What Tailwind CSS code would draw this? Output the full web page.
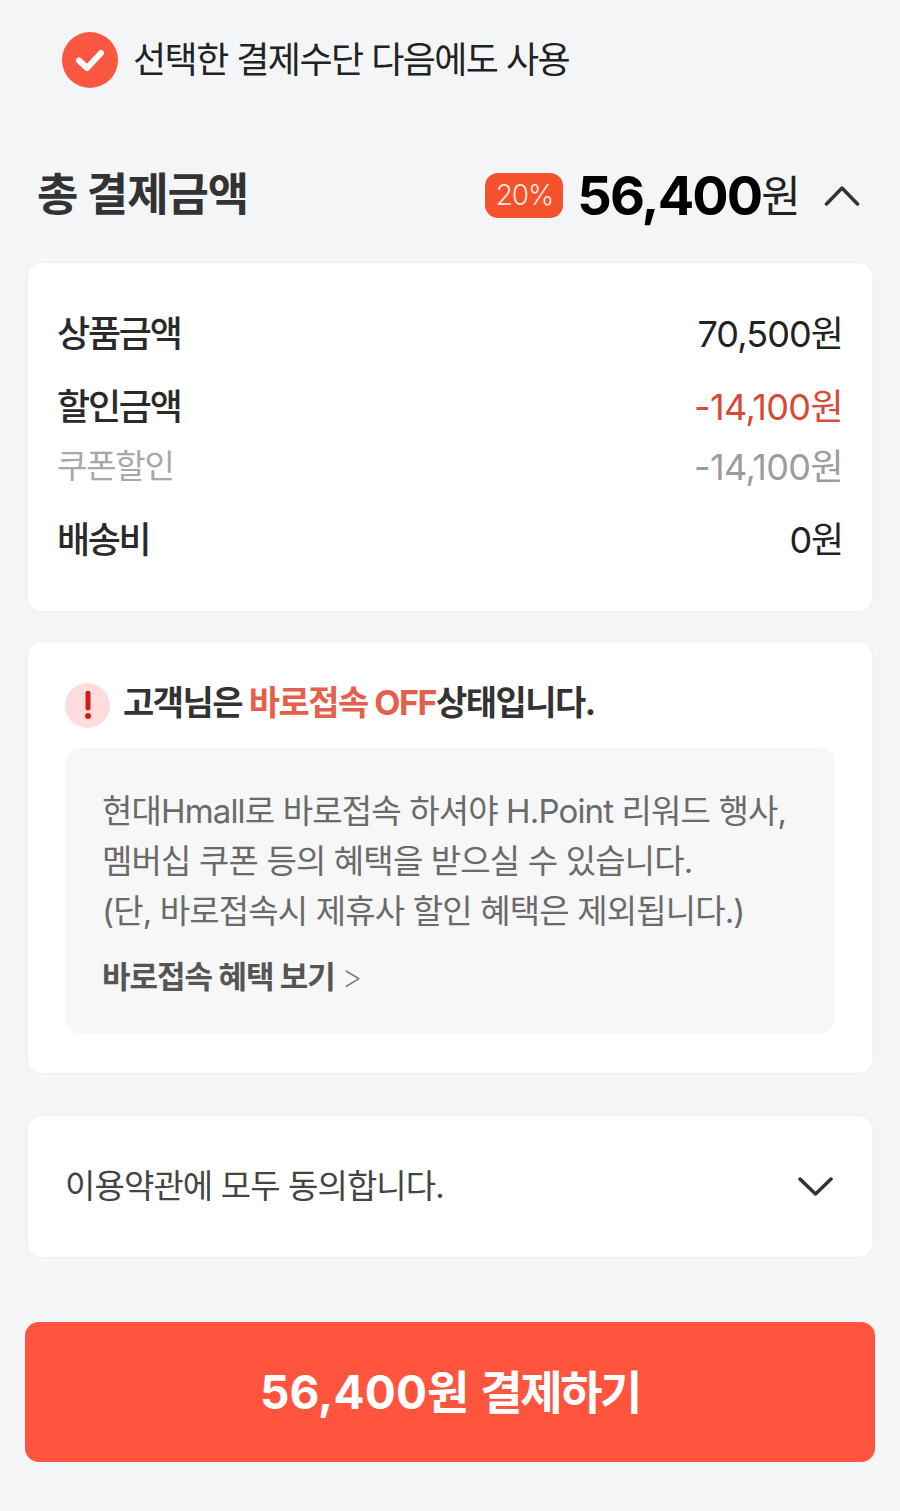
<!DOCTYPE html>
<html lang="ko">
<head>
  <meta charset="UTF-8">
  <meta name="viewport" content="width=device-width, initial-scale=1.0">
  <title>결제하기</title>
  <script src="https://cdn.jsdelivr.net/npm/@tailwindcss/browser@4"></script>
</head>
<body class="w-[900px] h-[1511px] overflow-hidden bg-[#f4f5f7] font-['Inter','Noto_Sans_CJK_KR',sans-serif] text-[#222]">

  <!-- Saved payment method -->
  <div class="flex items-center gap-[15px] pl-[62px] pt-[32px] h-[87px]">
    <svg class="w-[56px] h-[56px] shrink-0" viewBox="0 0 56 56">
      <circle cx="28" cy="28" r="28" fill="#f9573f"/>
      <path d="M17 28.5 L25 36 L39 21" fill="none" stroke="#fff" stroke-width="6" stroke-linecap="round" stroke-linejoin="round"/>
    </svg>
    <span class="text-[36px] leading-none tracking-[-1.55px]">선택한 결제수단 다음에도 사용</span>
  </div>

  <!-- Total -->
  <div class="flex items-center justify-between pl-[37px] pr-[40px] mt-[80px] h-[56px]">
    <span class="text-[45px] font-bold tracking-[-1.1px] text-[#333]">총 결제금액</span>
    <div class="flex items-center">
      <span class="flex items-center justify-center w-[78px] h-[45px] rounded-[13px] bg-[#f4512c] text-[#ffe9df] text-[28px] font-light tracking-[-1.2px]">20%</span>
      <span class="ml-[14px] text-[54px] font-bold tracking-[-1.9px] text-black">56,400<span class="align-[3px] text-[43px] font-normal text-[#222]">원</span></span>
      <svg class="w-[36px] h-[22px] ml-[25px]" viewBox="0 0 36 22">
        <path d="M2.5 20 L18 4 L33.5 20" fill="none" stroke="#333" stroke-width="3.5" stroke-linecap="round" stroke-linejoin="round"/>
      </svg>
    </div>
  </div>

  <!-- Price breakdown -->
  <section class="mx-[27px] mt-[39px] h-[350px] bg-white rounded-[14px] border border-[#eef0f2] px-[29px] pt-[48px] text-[36px]">
    <div class="flex justify-between items-center h-[46px]">
      <span class="font-medium tracking-[-2.2px] text-[#2a2a2a]">상품금액</span><span class="tracking-[-0.9px]">70,500원</span>
    </div>
    <div class="flex justify-between items-center h-[46px] mt-[27px]">
      <span class="font-medium tracking-[-2.2px] text-[#2a2a2a]">할인금액</span><span class="tracking-[-0.6px] text-[#d64a35]">-14,100원</span>
    </div>
    <div class="flex justify-between items-center h-[46px] mt-[14px] text-[#9c9c9c]">
      <span class="text-[33px] tracking-[-1.2px] text-[#a8a8a8]">쿠폰할인</span><span class="tracking-[-0.6px]">-14,100원</span>
    </div>
    <div class="flex justify-between items-center h-[46px] mt-[27px]">
      <span class="font-medium tracking-[-2.4px] text-[#2a2a2a]">배송비</span><span class="tracking-[-1.2px]">0원</span>
    </div>
  </section>

  <!-- Direct access notice -->
  <section class="mx-[27px] mt-[29px] h-[433px] bg-white rounded-[14px] border border-[#eef0f2] px-[38px] pt-[40px]">
    <div class="flex items-center gap-[13px] h-[46px] -ml-[1px]">
      <span class="flex items-center justify-center w-[45px] h-[45px] rounded-full bg-[#fcdcdc]">
        <svg class="w-[8px] h-[28px]" viewBox="0 0 8 28">
          <path d="M4 2 L4 17" stroke="#d01c1c" stroke-width="5" stroke-linecap="round"/>
          <circle cx="4" cy="25" r="3" fill="#d01c1c"/>
        </svg>
      </span>
      <p class="-mt-[5px] text-[34px] font-bold tracking-[-1.5px] text-[#333]">고객님은 <span class="text-[#e4604a]">바로접속 OFF</span>상태입니다.</p>
    </div>
    <div class="mt-[20px] h-[286px] rounded-[14px] bg-[#f7f7f8] pl-[36px] pt-[38px] text-[#6a6a6a]">
      <p class="text-[33px] leading-[50px] tracking-[-0.85px] whitespace-nowrap">현대Hmall로 바로접속 하셔야 H.Point 리워드 행사,<br>멤버십 쿠폰 등의 혜택을 받으실 수 있습니다.<br>(단, 바로접속시 제휴사 할인 혜택은 제외됩니다.)</p>
      <p class="mt-[15px] text-[31px] leading-[50px] font-bold tracking-[-1px] text-[#555]">바로접속 혜택 보기 <span class="text-[33px] font-extralight text-[#777]">&gt;</span></p>
    </div>
  </section>

  <!-- Terms -->
  <section class="flex items-center justify-between mx-[27px] mt-[41px] h-[143px] bg-white rounded-[14px] border border-[#eef0f2] pl-[37px] pr-[39px]">
    <span class="text-[33px] tracking-[-0.9px] text-[#444]">이용약관에 모두 동의합니다.</span>
    <svg class="w-[35px] h-[22px]" viewBox="0 0 35 22">
      <path d="M2 3 L17.5 18 L33 3" fill="none" stroke="#333" stroke-width="3.5" stroke-linecap="round" stroke-linejoin="round"/>
    </svg>
  </section>

  <!-- Pay button -->
  <button class="block w-[850px] h-[140px] mx-[25px] mt-[64px] rounded-[14px] bg-[#ff553e] text-white text-[46px] font-bold"><span class="tracking-[0.1px]">56,400원</span> <span class="tracking-[-2.4px]">결제하기</span></button>

</body>
</html>
